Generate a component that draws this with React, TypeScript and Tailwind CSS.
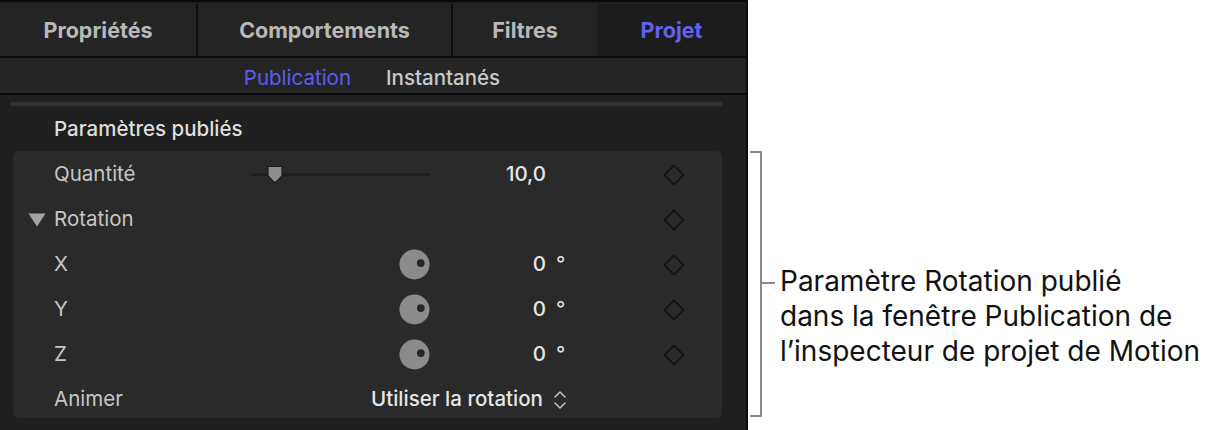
import type { ReactNode } from 'react';

const font = { fontFamily: 'Inter, "Noto Sans", sans-serif' };

function Diamond() {
  return (
    <svg width="22" height="22" viewBox="0 0 22 22">
      <path d="M11 1.5 L20.5 11 L11 20.5 L1.5 11 Z" fill="none" stroke="#111" strokeWidth="1.6" />
    </svg>
  );
}

function Dial() {
  return (
    <svg width="31" height="31" viewBox="0 0 32 32">
      <circle cx="16" cy="16" r="15.5" fill="#8b8b8b" />
      <circle cx="22.5" cy="14.5" r="4" fill="#262626" />
    </svg>
  );
}

function Slider() {
  return (
    <div className="relative h-[20px] w-[178px]">
      <div className="absolute left-0 right-0 top-[8px] h-[3px] rounded-full bg-[#1e1e1e]" />
      <svg className="absolute left-[14px] top-0" width="18" height="20" viewBox="0 0 18 20">
        <path d="M2 1.5 H16 V11 L9 18 L2 11 Z" fill="#8d8d8d" stroke="#1a1a1a" strokeWidth="1.2" strokeLinejoin="round" />
      </svg>
    </div>
  );
}

function Row({ label, control, value, suffix, key_ = true, triangle = false }: {
  label: string;
  control?: ReactNode;
  value?: string;
  suffix?: string;
  key_?: boolean;
  triangle?: boolean;
}) {
  return (
    <div className="relative flex h-[45px] items-center pl-[41px]">
      {triangle && (
        <svg className="absolute left-[15px] top-[16px]" width="18" height="14" viewBox="0 0 18 14">
          <path d="M0.5 0.5 H17.5 L9 13.5 Z" fill="#a3a3a3" />
        </svg>
      )}
      <div className="w-[196px] text-[20.5px] text-[#c6c6c6]">{label}</div>
      <div className="flex w-[180px] justify-end">{control}</div>
      <div className="w-[116px] text-right text-[20.5px] font-medium text-[#e6e6e6]">{value}</div>
      <div className="w-[30px] pl-[10px] text-[20.5px] text-[#e6e6e6]">{suffix}</div>
      <div className="ml-[87px] flex w-[22px] justify-center">{key_ && <Diamond />}</div>
    </div>
  );
}

export default function App() {
  return (
    <div className="flex h-[430px] w-[1207px] bg-white" style={font}>
      {/* Inspector panel */}
      <div className="flex w-[748px] flex-col border-r-2 border-[#0c0c0c] bg-[#1f1f1f]">
        <div className="flex h-[58px] border-y-2 border-[#0c0c0c] pt-[2px] text-[21.5px] font-bold text-[#b9b9b9]">
          <div className="flex w-[198px] items-center justify-center border-r-2 border-[#0c0c0c] bg-[#242424]">Propriétés</div>
          <div className="flex w-[255px] items-center justify-center border-r-2 border-[#0c0c0c] bg-[#242424]">Comportements</div>
          <div className="flex w-[144px] items-center justify-center bg-[#242424]">Filtres</div>
          <div className="flex flex-1 items-center justify-center bg-[#1c1c1c] text-[#6361f2]">Projet</div>
        </div>
        <div className="flex h-[37px] items-center justify-center gap-[35px] border-b-2 border-[#0c0c0c] bg-[#252525] pt-[5px] pr-[2px] text-[20.5px]">
          <span className="text-[#5d5cf0]">Publication</span>
          <span className="font-medium text-[#c9c9c9]">Instantanés</span>
        </div>
        <div className="mx-[11px] mt-[7px] h-[4px] w-[712px] bg-[#303030]" />
        <div className="flex h-[45px] items-center pl-[54px] pt-[2px] text-[20.5px] font-medium text-[#dedede]">
          Paramètres publiés
        </div>
        <div className="ml-[13px] h-[267px] w-[709px] rounded-[6px] bg-[#2a2a2a] pt-[1px]">
          <Row label="Quantité" control={<Slider />} value="10,0" />
          <Row label="Rotation" triangle />
          <Row label="X" control={<Dial />} value="0" suffix="°" />
          <Row label="Y" control={<Dial />} value="0" suffix="°" />
          <Row label="Z" control={<Dial />} value="0" suffix="°" />
          <div className="flex h-[45px] items-center pl-[41px]">
            <div className="w-[317px] text-[20.5px] text-[#c6c6c6]">Animer</div>
            <span className="text-[20.5px] font-medium text-[#e6e6e6]">Utiliser la rotation</span>
            <svg className="ml-[10px]" width="14" height="22" viewBox="0 0 14 22">
              <path d="M2 8 L7 3 L12 8 M2 14 L7 19 L12 14" fill="none" stroke="#bdbdbd" strokeWidth="1.6" strokeLinecap="round" strokeLinejoin="round" />
            </svg>
          </div>
        </div>
      </div>

      {/* Callout */}
      <div className="flex pt-[151px]">
        <div className="ml-[2px] h-[266px] w-[12px] border-y-2 border-r-2 border-[#8a8a8a]" />
        <div className="mt-[131px] h-[2px] w-[13px] bg-[#8a8a8a]" />
        <div className="ml-[5px] mt-[113px] text-[28px] leading-[35px] text-[#111]">
          <div>Paramètre Rotation publié</div>
          <div>dans la fenêtre Publication de</div>
          <div>l’inspecteur de projet de Motion</div>
        </div>
      </div>
    </div>
  );
}
